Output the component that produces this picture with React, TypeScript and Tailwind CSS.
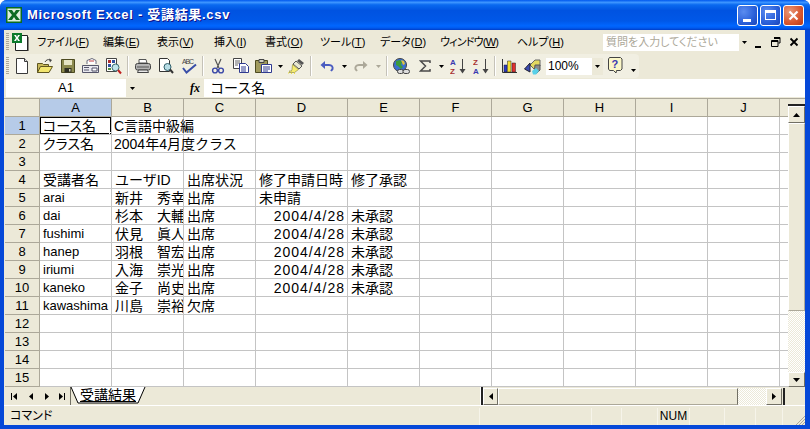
import React from "react";

const COLS = ["A", "B", "C", "D", "E", "F", "G", "H", "I", "J", ""];
const colClass = (i: number) =>
  i === 10 ? "w-[8px]" : i === 3 ? "w-[92px]" : "w-[72px]";

const DATA: string[][] = [
  ["コース名", "C言語中級編"],
  ["クラス名", "2004年4月度クラス"],
  [],
  ["受講者名", "ユーザID", "出席状況", "修了申請日時", "修了承認"],
  ["arai", "新井　秀幸", "出席", "未申請"],
  ["dai", "杉本　大輔", "出席", "2004/4/28", "未承認"],
  ["fushimi", "伏見　眞人", "出席", "2004/4/28", "未承認"],
  ["hanep", "羽根　智宏", "出席", "2004/4/28", "未承認"],
  ["iriumi", "入海　崇光", "出席", "2004/4/28", "未承認"],
  ["kaneko", "金子　尚史", "出席", "2004/4/28", "未承認"],
  ["kawashima", "川島　崇裕", "欠席"],
  [], [], [], [],
];

const S = ({ children, w = 16, h = 16 }: { children: React.ReactNode; w?: number; h?: number }) => (
  <svg width={w} height={h} viewBox={`0 0 ${w} ${h}`} className="block">{children}</svg>
);

const New = () => <S><path d="M2.5 .5h8l3 3v12h-11z" fill="#fff" stroke="#3a3a3a" /><path d="M10.5 .5v3h3" fill="#ddd" stroke="#3a3a3a" /></S>;
const Open = () => (
  <svg width="18" height="16" viewBox="0 0 18 16" className="block">
    <path d="M1.5 5.5h5l1 1h5v8h-11z" fill="#c8b95a" stroke="#5e5520" />
    <path d="M1.5 14.5l3-6h12l-3.5 6z" fill="#f2e56e" stroke="#5e5520" />
    <path d="M9 4c1-2 3-3 5-2" fill="none" stroke="#444" />
    <path d="M13 .5l3 1.5-2 2.5z" fill="#444" />
  </svg>
);
const Save = () => (
  <S><path d="M1.5 1.5h13v13h-13z" fill="#8c8a4e" stroke="#4c4a20" /><path d="M4 2h8v5H4z" fill="#e6e4c4" /><path d="M4.5 10h7v4.5h-7z" fill="#2f2f22" /><path d="M9 11h1.5v2.5H9z" fill="#cfcfb0" /></S>
);
const Mail = () => (
  <svg width="17" height="16" viewBox="0 0 17 16" className="block">
    <path d="M5 6V2.5L10 .5l4 2V6" fill="#fff" stroke="#6a6a7a" />
    <path d="M7 3h5" stroke="#c04040" />
    <path d="M.5 7.5h16v7H.5z" fill="#e8e8ee" stroke="#55556a" />
    <path d="M2 9.5h5M2 12h5M10 10h5v3h-5z" stroke="#55556a" fill="#fff" />
  </svg>
);
const Find = () => (
  <svg width="16" height="17" viewBox="0 0 16 17" className="block">
    <path d="M.5 .5h10v13H.5z" fill="#fff" stroke="#444" />
    <path d="M2 2h3v3H2z" fill="#b03030" /><path d="M6 2h3v3H6z" fill="#3050a0" /><path d="M2 6h3v3H2z" fill="#3050a0" /><path d="M2 10h3v2H2z" fill="#509040" />
    <circle cx="9.5" cy="9.5" r="3.5" fill="#bfe4ea" stroke="#3a6b70" />
    <path d="M12 12l3 3.5" stroke="#c02020" strokeWidth="2" />
  </svg>
);
const Print = () => (
  <S><path d="M4 1.5h7l1 3.5H4z" fill="#fff" stroke="#555" /><rect x=".5" y="5.5" width="15" height="6.5" rx="2" fill="#b4b4b4" stroke="#444" /><path d="M2 9h12" stroke="#555" /><path d="M3.5 12h9l1 2.5h-11z" fill="#e8e8e8" stroke="#444" /></S>
);
const Preview = () => (
  <S><path d="M1.5 .5h8l2 2v11h-10z" fill="#fff" stroke="#333" /><circle cx="9.5" cy="9" r="3.5" fill="#b7dde6" stroke="#2f5e6a" /><path d="M12 11.5l3 3.5" stroke="#333" strokeWidth="2" /></S>
);
const Spell = () => (
  <svg width="16" height="16" viewBox="0 0 16 16" className="block">
    <text x="1" y="6" fontSize="7" fontFamily="Liberation Sans, sans-serif" fill="#444" textLength="12">ABC</text>
    <path d="M2 10l3.5 4.5L15 6.5" fill="none" stroke="#3a4fa8" strokeWidth="2" />
  </svg>
);
const Cut = () => (
  <S><path d="M5 1l4 9M11 1L7 10" stroke="#555" strokeWidth="1.2" fill="none" /><circle cx="5" cy="12.5" r="2.4" fill="none" stroke="#3a48a8" strokeWidth="1.4" /><circle cx="11" cy="12.5" r="2.4" fill="none" stroke="#3a48a8" strokeWidth="1.4" /></S>
);
const Copy = () => (
  <S><path d="M.5 .5h8v10h-8z" fill="#fff" stroke="#444" /><path d="M2 3h5M2 5h5M2 7h3" stroke="#666" /><path d="M6.5 5.5h6l3 3v6h-9z" fill="#fff" stroke="#2f3a90" /><path d="M8 9h5M8 11h5M8 13h5" stroke="#2f3a90" /></S>
);
const Paste = () => (
  <svg width="17" height="16" viewBox="0 0 17 16" className="block">
    <path d="M.5 2.5h12v12H.5z" fill="#a09a5c" stroke="#4c4a20" />
    <path d="M4 1.5h5v3H4z" fill="#d0d0c0" stroke="#444" />
    <path d="M6.5 6.5h10v8h-10z" fill="#fff" stroke="#2f3a90" />
    <path d="M8 9h7M8 11h7M8 13h5" stroke="#2f3a90" />
  </svg>
);
const Painter = () => (
  <svg width="17" height="16" viewBox="0 0 17 16" className="block">
    <path d="M11 1l5 4-2 2-5-4z" fill="#555" />
    <path d="M8 3l6 5-3 3-6-5z" fill="#e8e8d0" stroke="#555" />
    <path d="M4.5 6.5l6 5-4 3H1l1-2 1 1 1-2z" fill="#f6ec70" stroke="#8a8430" strokeWidth=".6" />
    <path d="M0 15h1M3 15.5h1M6 15.5h1" stroke="#f0e040" />
  </svg>
);
const Undo = ({ c }: { c: string }) => (
  <svg width="14" height="12" viewBox="0 0 14 12" className="block">
    <path d="M3 5h6c3 0 4 2 3.5 4L11 11" fill="none" stroke={c} strokeWidth="2" />
    <path d="M5 1v8L.5 5z" fill={c} />
  </svg>
);
const Redo = ({ c }: { c: string }) => (
  <svg width="14" height="12" viewBox="0 0 14 12" className="block">
    <path d="M11 5H5C2 5 1 7 1.5 9L3 11" fill="none" stroke={c} strokeWidth="2" />
    <path d="M9 1v8l4.5-4z" fill={c} />
  </svg>
);
const Globe = () => (
  <svg width="17" height="17" viewBox="0 0 17 17" className="block">
    <circle cx="7" cy="7" r="6.5" fill="#3a6fd0" stroke="#444" />
    <path d="M3 3l4-1 2 2-1 3 2 2-2 2-3-3-2-1z" fill="#3a9a3a" />
    <path d="M8 2l3 1 1 3-2 1z" fill="#e0c040" />
    <rect x="4.5" y="11.5" width="6" height="4" rx="2" fill="#ddd" stroke="#444" />
    <rect x="10" y="11.5" width="6.5" height="4" rx="2" fill="#ddd" stroke="#444" />
  </svg>
);
const Sigma = () => (
  <svg width="12" height="12" viewBox="0 0 12 12" className="block"><path d="M11 3V1H1.5l5 5-5 5H11V9" fill="none" stroke="#4a4a4a" strokeWidth="1.5" /></svg>
);
const Sort = ({ top, bottom, tc, bc }: { top: string; bottom: string; tc: string; bc: string }) => (
  <svg width="16" height="17" viewBox="0 0 16 17" className="block">
    <text x="0" y="7" fontSize="8" fontWeight="700" fontFamily="Liberation Sans, sans-serif" fill={tc}>{top}</text>
    <text x="0" y="16" fontSize="8" fontWeight="700" fontFamily="Liberation Sans, sans-serif" fill={bc}>{bottom}</text>
    <path d="M12.5 1v11" stroke="#444" />
    <path d="M9.5 11h6l-3 4.5z" fill="#444" />
  </svg>
);
const Chart = () => (
  <svg width="17" height="16" viewBox="0 0 17 16" className="block">
    <path d="M1.5 1v13.5H16" fill="none" stroke="#333" />
    <path d="M3 7h3v7H3z" fill="#2c3ac8" stroke="#222" strokeWidth=".5" />
    <path d="M6.5 3h3.5v11H6.5z" fill="#f4e030" stroke="#222" strokeWidth=".5" />
    <path d="M11 5h3.5v9H11z" fill="#e03030" stroke="#222" strokeWidth=".5" />
  </svg>
);
const MapIcon = () => (
  <svg width="17" height="17" viewBox="0 0 17 17" className="block">
    <path d="M6 7l5-5h5v6l-5 4z" fill="#e2d860" stroke="#666" />
    <path d="M11 7h5v5l-3 3h-3z" fill="#8a8a8a" stroke="#555" />
    <path d="M.5 11L6 5v9z" fill="#3a4ab0" stroke="#223" />
    <path d="M8 13l4-3 3 3-3 3.5H9z" fill="#58d0e8" />
  </svg>
);
const Help = () => (
  <svg width="15" height="18" viewBox="0 0 15 18" className="block">
    <path d="M1.5 .5h11l1.5 1.5v10l-1.5 1.5H8.5L8 16l-2.5-2.5h-4L.5 12V2z" fill="#fbf7c8" stroke="#444" />
    <text x="3.5" y="11" fontSize="11" fontWeight="700" fontFamily="Liberation Sans, sans-serif" fill="#3a3ab0">?</text>
  </svg>
);
const DD = ({ c = "#000" }: { c?: string }) => (
  <svg width="5" height="3" viewBox="0 0 5 3" className="block"><path d="M0 0h5L2.5 3z" fill={c} /></svg>
);
const Arrow = ({ d }: { d: "u" | "d" | "l" | "r" }) => {
  const p = { u: "M3.5 0L7 4H0z", d: "M0 0h7L3.5 4z", l: "M4 0v7L0 3.5z", r: "M0 0v7l4-3.5z" }[d];
  const wide = d === "u" || d === "d";
  return (
    <svg width={wide ? 7 : 4} height={wide ? 4 : 7} viewBox={wide ? "0 0 7 4" : "0 0 4 7"} className="block"><path d={p} fill="#000" /></svg>
  );
};
const Sep = () => (
  <div className="w-[6px] h-[20px] flex justify-center"><div className="w-[1px] h-full bg-[#c5c2b8] border-r border-white box-content" /></div>
);
const Grip = () => (
  <div className="w-[3px] h-[18px] bg-[repeating-linear-gradient(180deg,#aca899_0,#aca899_1px,transparent_1px,transparent_2px)]" />
);
const I = ({ children }: { children: React.ReactNode }) => (
  <div className="w-[23px] h-[22px] flex items-center justify-center shrink-0">{children}</div>
);
const D = ({ children, c }: { children?: React.ReactNode; c: string }) => (
  <div className={`${c} h-[22px] flex items-center justify-center shrink-0`}>{children}</div>
);

const BTN = "border border-t-white border-l-white border-b-[#716f64] border-r-[#716f64] bg-[#ece9d8] flex items-center justify-center shrink-0";
const HATCH = "bg-[repeating-conic-gradient(#ffffff_0_25%,#ece9d8_0_50%)] [background-size:2px_2px]";
const CJK = "font-['Liberation_Sans','Noto_Sans_CJK_JP',sans-serif]";

const Menu = ({ label, m, c, t = "" }: { label: string; m: string; c: string; t?: string }) => (
  <div className={`${c} ${t} shrink-0 text-[11px] leading-[24px] text-black whitespace-nowrap [font-feature-settings:'palt']`}>
    {label}(<span className="underline">{m}</span>)
  </div>
);

function Cell({ v, next, i, r }: { v?: string; next?: string; i: number; r: number }) {
  const isLatin = !!v && /^[a-z]+$/.test(v);
  const isDate = !!v && /^[0-9/]+$/.test(v);
  const latinStart = !!v && /^[A-Z0-9]/.test(v) && !isDate;
  const size = isLatin ? "text-[13px]" : "text-[14px]";
  const active = r === 0 && i === 0;
  return (
    <div
      className={`${colClass(i)} ${i === 10 ? "" : "border-r"} h-[18px] border-b border-[#c4c4c4] shrink-0 leading-[18px] whitespace-nowrap text-black relative ${size} ${latinStart ? "pl-[2px]" : "pl-[3px]"} ${next ? "overflow-hidden" : ""} ${v && !next ? "z-10" : ""} ${active ? "z-20" : ""} ${isDate ? "text-right pr-[2px] tracking-[1px]" : ""} ${r < 2 && i === 0 ? "[font-feature-settings:'palt']" : ""}`}
    >
      {active && (
        <>
          <div className="absolute left-[-1px] top-[-1px] w-[73px] h-[19px] border-2 border-black" />
          <div className="absolute right-[-3px] bottom-[-3px] w-[5px] h-[5px] bg-black border border-white" />
        </>
      )}
      {v}
    </div>
  );
}

export default function App() {
  return (
    <div className={`w-[810px] h-[429px] flex flex-col overflow-hidden bg-white ${CJK}`}>
      <div className="w-[810px] h-[429px] rounded-t-[7px] overflow-hidden bg-[#0548d8] flex flex-col">
        {/* title bar */}
        <div className="h-[30px] shrink-0 flex items-center pl-[6px] pr-[6px] bg-[linear-gradient(180deg,#0058ee_0,#3d95ff_8%,#0a6af0_16%,#0053e1_35%,#0058e8_70%,#0066ff_86%,#005bf0_93%,#003dc7_100%)]">
          <svg width="16" height="16" viewBox="0 0 16 16" className="block mr-[5px] shrink-0">
            <rect width="16" height="16" fill="#0b6b22" />
            <rect x="1.5" y="1.5" width="13" height="13" fill="#dcefdc" />
            <path d="M2 3h4l2 3 2-3h4l-4 5 4 5h-4l-2-3-2 3H2l4-5z" fill="#0b6b22" />
          </svg>
          <div className="text-[13px] font-bold text-white tracking-[0.7px] leading-[30px] whitespace-nowrap flex-1 [text-shadow:1px_1px_#0f1089]">
            Microsoft Excel - 受講結果.csv
          </div>
          <div className="flex gap-[2px] items-center">
            <div className="w-[21px] h-[21px] rounded-[3px] border border-white bg-[radial-gradient(circle_at_30%_30%,#5a8cf0,#2a5fd8_60%,#1c45b8)] flex items-end pl-[5px] pb-[3px]">
              <div className="w-[8px] h-[3px] bg-white" />
            </div>
            <div className="w-[21px] h-[21px] rounded-[3px] border border-white bg-[radial-gradient(circle_at_30%_30%,#5a8cf0,#2a5fd8_60%,#1c45b8)] flex items-center justify-center">
              <div className="w-[11px] h-[10px] border border-white border-t-[3px]" />
            </div>
            <div className="w-[21px] h-[21px] rounded-[3px] border border-white bg-[radial-gradient(circle_at_30%_30%,#e89878,#d8562e_60%,#b83a18)] flex items-center justify-center">
              <svg width="11" height="11" viewBox="0 0 11 11" className="block"><path d="M1.5 1.5l8 8M9.5 1.5l-8 8" stroke="#fff" strokeWidth="2.2" /></svg>
            </div>
          </div>
        </div>

        {/* body */}
        <div className="ml-[4px] mr-[5px] h-[395px] shrink-0 bg-[#ece9d8] flex flex-col">
          {/* menu bar */}
          <div className="h-[24px] flex items-center shrink-0 pl-[2px]">
            <Grip />
            <svg width="18" height="18" viewBox="0 0 18 18" className="block ml-[3px] mr-[7px] shrink-0">
              <path d="M3.5 2.5h12v15h-12z" fill="#fff" stroke="#222" />
              <path d="M16 4v14H5" fill="none" stroke="#222" />
              <rect x="0" y="0" width="10" height="10" fill="#0b7a2a" />
              <path d="M2 2h2l1 2 1-2h2L6 5l2 3H6L5 6 4 8H2l2-3z" fill="#fff" />
            </svg>
            <Menu label="ファイル" m="F" c="w-[66px]" />
            <Menu label="編集" m="E" c="w-[54px]" />
            <Menu label="表示" m="V" c="w-[57px]" />
            <Menu label="挿入" m="I" c="w-[51px]" />
            <Menu label="書式" m="O" c="w-[55px]" />
            <Menu label="ツール" m="T" c="w-[60px]" />
            <Menu label="データ" m="D" c="w-[60px]" />
            <Menu label="ウィンドウ" m="W" c="w-[77px]" t="tracking-[-0.8px]" />
            <Menu label="ヘルプ" m="H" c="w-[88px]" />
            <div className="w-[147px] h-[17px] bg-white flex shrink-0 items-center -ml-[2px]">
              <div className="flex-1 text-[11px] leading-[17px] pl-[3px] text-[#aca899] whitespace-nowrap [font-feature-settings:'palt']">質問を入力してください</div>
              <div className="w-[11px] h-[17px] bg-[#ece9d8] flex items-center justify-center"><DD /></div>
            </div>
            <div className="w-[52px] flex items-center shrink-0 pl-[4px] gap-[8px] h-[17px]">
              <svg width="9" height="9" viewBox="0 0 9 9" className="block mt-[3px]"><path d="M1 7h6v2H1z" fill="#000" /></svg>
              <svg width="10" height="10" viewBox="0 0 10 10" className="block"><path d="M3 .5h6v5.5H7.5M.5 3.5h6.5v6H.5zM3 1.5h6M.5 4.5h6.5" fill="none" stroke="#000" /></svg>
              <svg width="10" height="10" viewBox="0 0 10 10" className="block"><path d="M1.5 1.5l7 7M8.5 1.5l-7 7" stroke="#000" strokeWidth="1.8" /></svg>
            </div>
          </div>

          {/* toolbar */}
          <div className="h-[24px] flex items-center shrink-0">
            <div className="w-[635px] h-[24px] shrink-0 bg-[#f1efe2] rounded-r-[4px] flex items-center pl-[2px]">
              <div className="w-[4px] shrink-0 flex"><Grip /></div>
              <I><New /></I><I><Open /></I><I><Save /></I><I><Mail /></I><I><Find /></I>
              <Sep />
              <I><Print /></I><I><Preview /></I><I><Spell /></I>
              <Sep />
              <I><Cut /></I><I><Copy /></I><I><Paste /></I>
              <D c="w-[10px]"><DD /></D>
              <I><Painter /></I>
              <Sep />
              <D c="w-[26px]"><Undo c="#4a5cc0" /></D>
              <D c="w-[9px]"><DD /></D>
              <I><Redo c="#aca899" /></I>
              <D c="w-[12px]"><DD c="#aca899" /></D>
              <Sep />
              <I><Globe /></I><I><Sigma /></I>
              <D c="w-[10px]"><DD /></D>
              <I><Sort top="A" bottom="Z" tc="#3a3ab0" bc="#a83232" /></I>
              <I><Sort top="Z" bottom="A" tc="#a83232" bc="#3a3ab0" /></I>
              <Sep />
              <I><Chart /></I><I><MapIcon /></I>
              <div className="ml-[2px] w-[57px] h-[17px] bg-white flex items-center shrink-0">
                <div className="flex-1 text-[12px] leading-[17px] pl-[2px] text-black">100%</div>
                <div className="w-[11px] h-[17px] bg-[#ece9d8] flex items-center justify-center"><DD /></div>
              </div>
              <D c="w-[24px]"><Help /></D>
              <D c="w-[12px]"><div className="pt-[8px]"><DD /></div></D>
            </div>
          </div>

          {/* formula bar */}
          <div className="h-[20px] flex items-center shrink-0">
            <div className="ml-[2px] w-[120px] h-[18px] bg-white text-[13px] leading-[18px] text-center text-black shrink-0">A1</div>
            <div className="w-[12px] flex justify-center shrink-0"><DD /></div>
            <div className="w-[66px] text-right pr-[4px] italic font-bold text-[12px] leading-[18px] text-black shrink-0 font-['Liberation_Serif',serif]">fx</div>
            <div className="flex-1 h-[18px] bg-white text-[14px] leading-[18px] pl-[6px] text-black">コース名</div>
          </div>
          <div className="h-[1px] shrink-0 bg-[#aca899]" />

          {/* sheet + vertical scrollbar */}
          <div className="h-[288px] flex shrink-0">
            <div className="pl-[1px] flex flex-col shrink-0">
              <div className="flex h-[18px] shrink-0">
                <div className="w-[35px] h-[18px] border-r border-b border-[#aca899] bg-[#ece9d8] shrink-0" />
                {COLS.map((c, i) => (
                  <div
                    key={i}
                    className={`${colClass(i)} h-[18px] shrink-0 border-b text-center text-[13px] leading-[18px] text-black ${i === 10 ? "" : "border-r"} border-[#aca899] ${i === 0 ? "bg-[#b6cbe8]" : "bg-[#ece9d8]"}`}
                  >
                    {c}
                  </div>
                ))}
              </div>
              <div className="flex flex-col bg-white">
                {DATA.map((row, r) => (
                  <div key={r} className="flex h-[18px] shrink-0">
                    <div className={`w-[35px] h-[18px] shrink-0 border-r border-b border-[#aca899] text-center text-[13px] leading-[18px] text-black ${r === 0 ? "bg-[#b6cbe8]" : "bg-[#ece9d8]"}`}>
                      {r + 1}
                    </div>
                    {COLS.map((_, i) => (
                      <Cell key={i} v={row[i]} next={row[i + 1]} i={i} r={r} />
                    ))}
                  </div>
                ))}
              </div>
            </div>
            <div className="w-[17px] shrink-0 flex flex-col">
              <div className="h-[5px] shrink-0 bg-[#ece9d8] border-b-2 border-[#222] box-content" />
              <div className={`${BTN} h-[17px]`}><Arrow d="u" /></div>
              <div className="h-[188px] shrink-0 bg-[#ece9d8] border border-t-white border-l-white border-b-[#aca899] border-r-[#aca899]" />
              <div className={`flex-1 ${HATCH}`} />
              <div className={`${BTN} h-[15px]`}><Arrow d="d" /></div>
            </div>
          </div>

          {/* sheet tabs + horizontal scrollbar */}
          <div className="h-[19px] flex items-center shrink-0 pl-[1px] bg-[#ece9d8] border-b border-white">
            <div className="w-[65px] flex items-center shrink-0 h-[18px]">
              <div className="w-[18px] flex items-center justify-center gap-[1px]"><div className="w-[1px] h-[7px] bg-black" /><Arrow d="l" /></div>
              <div className="w-[16px] flex justify-center"><Arrow d="l" /></div>
              <div className="w-[15px] flex justify-center"><Arrow d="r" /></div>
              <div className="w-[16px] flex items-center justify-center gap-[1px]"><Arrow d="r" /><div className="w-[1px] h-[7px] bg-black" /></div>
            </div>
            <div className="relative w-[77px] h-[18px] shrink-0">
              <svg width="77" height="18" viewBox="0 0 77 18" className="block absolute inset-0">
                <path d="M.5 0v18" stroke="#716f64" />
                <path d="M1 0l7 16h60l7-16z" fill="#fff" />
                <path d="M1 0l7 16h60l7-16" fill="none" stroke="#000" />
              </svg>
              <div className="relative pl-[10px] text-[14px] leading-[17px] text-black underline whitespace-nowrap">受講結果</div>
            </div>
            <div className="w-[333px] shrink-0" />
            <div className="w-[2px] h-[18px] bg-[#222] shrink-0 border-l border-white box-content" />
            <div className={`${BTN} w-[15px] h-[17px]`}><Arrow d="l" /></div>
            <div className="w-[240px] h-[17px] shrink-0 bg-[#ece9d8] border border-t-white border-l-white border-b-[#aca899] border-r-[#716f64]" />
            <div className={`w-[28px] h-[17px] shrink-0 ${HATCH}`} />
            <div className={`${BTN} w-[16px] h-[17px]`}><Arrow d="r" /></div>
            <div className="w-[2px] h-[17px] shrink-0 bg-[#222] ml-[1px]" />
          </div>

          {/* status bar */}
          <div className="h-[19px] flex items-center shrink-0 pt-[1px] relative bg-[#ece9d8]">
            <div className="w-[476px] h-[17px] shrink-0 text-[12px] leading-[17px] pl-[6px] text-black border-r border-[#f6f4ea] [font-feature-settings:'palt']">コマンド</div>
            <div className="w-[112px] h-[17px] shrink-0 border-r border-[#f6f4ea]" />
            <div className="w-[30px] h-[17px] shrink-0 border-r border-[#f6f4ea]" />
            <div className="w-[36px] h-[17px] shrink-0 border-r border-[#f6f4ea]" />
            <div className="w-[32px] h-[17px] shrink-0 text-[12px] leading-[17px] text-center text-black border-r border-[#f6f4ea] font-['Liberation_Sans',sans-serif]">NUM</div>
            <div className="w-[35px] h-[17px] shrink-0 border-r border-[#f6f4ea]" />
            <div className="w-[31px] h-[17px] shrink-0 border-r border-[#f6f4ea]" />
            <div className="w-[27px] h-[17px] shrink-0 border-r border-[#f6f4ea]" />
            <svg width="10" height="10" viewBox="0 0 10 10" className="block absolute right-0 bottom-0">
              <path d="M10 1L1 10M10 4l-6 6M10 7l-3 3" stroke="#aca899" />
            </svg>
          </div>
        </div>
      </div>
    </div>
  );
}
